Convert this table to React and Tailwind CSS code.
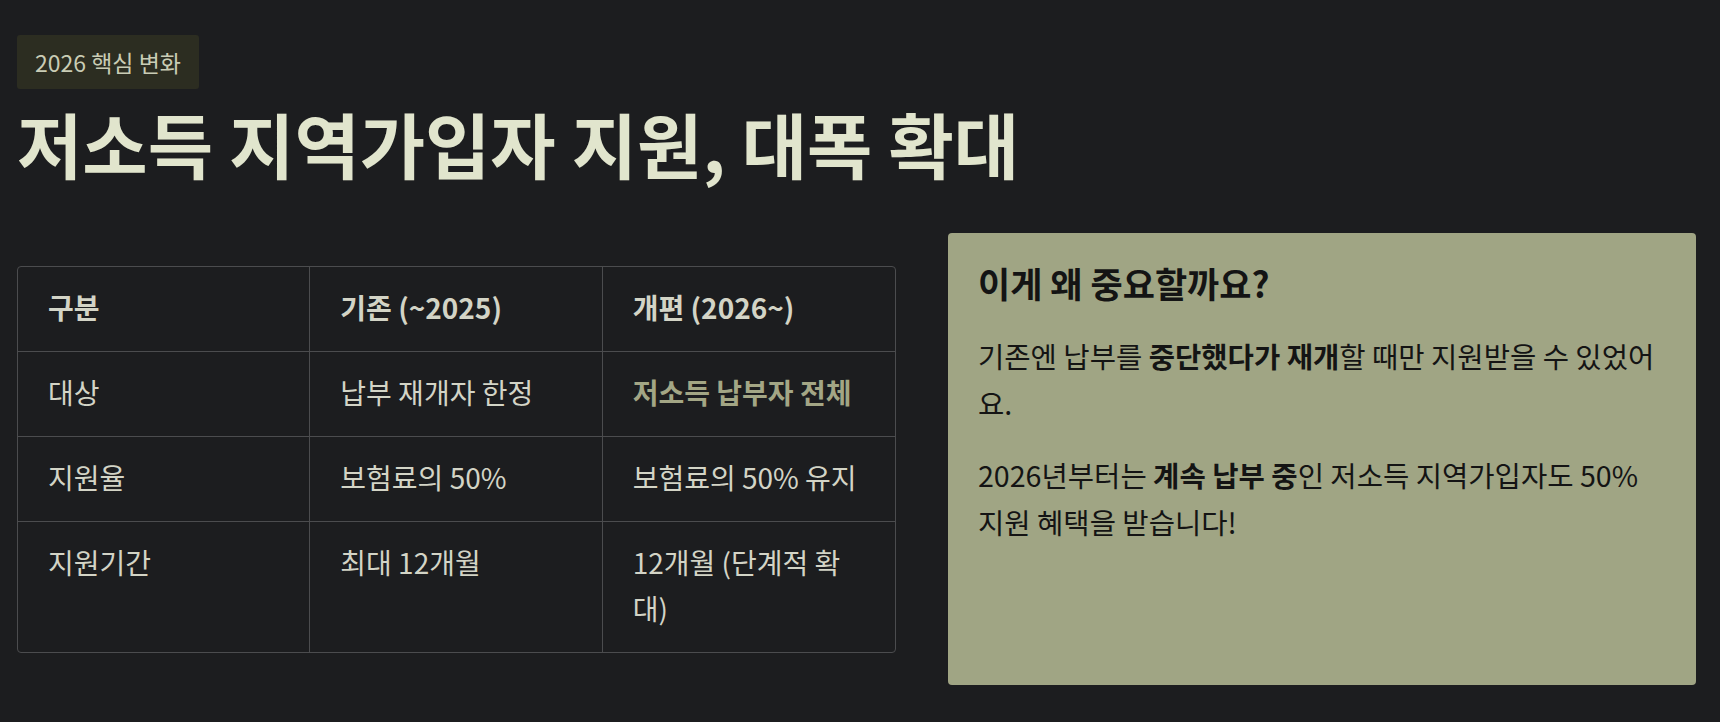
import React from "react";

export default function App() {
  const rows = [
    ["대상", "납부 재개자 한정", "저소득 납부자 전체", true],
    ["지원율", "보험료의 50%", "보험료의 50% 유지", false],
    ["지원기간", "최대 12개월", "12개월 (단계적 확대)", false],
  ];
  return (
    <div className="min-h-screen w-full bg-[#1c1d1f] pl-[17px] pr-[24px] pt-[35px] pb-[37px] font-['Noto_Sans_CJK_KR','Noto_Sans',sans-serif]">
      <div className="inline-block h-[54px] rounded-[3px] bg-[#2c2d21] px-[18px] text-[23px] leading-[54px] text-[#c9ccb5]">
        2026 핵심 변화
      </div>
      <h1 className="mt-[9px] text-[71px] font-bold leading-[88px] text-[#e1e5cd]">
        저소득 지역가입자 지원, 대폭 확대
      </h1>
      <div className="mt-[47px] flex items-center gap-[52px]">
        <div className="w-[879px] overflow-hidden rounded-[4px] border border-[#4b4c4e]">
          <div className="grid grid-cols-3 border-b border-[#4b4c4e]">
            {["구분", "기존 (~2025)", "개편 (2026~)"].map((h, i) => (
              <div
                key={h}
                className={`px-[30px] pt-[17px] pb-[21px] text-[28px] font-bold leading-[46px] text-[#d3d4c6] ${i < 2 ? "border-r border-[#4b4c4e]" : ""}`}
              >
                {h}
              </div>
            ))}
          </div>
          {rows.map((r, ri) => (
            <div
              key={r[0]}
              className={`grid grid-cols-3 ${ri < rows.length - 1 ? "border-b border-[#4b4c4e]" : ""}`}
            >
              <div className="border-r border-[#4b4c4e] px-[30px] pt-[17px] pb-[21px] text-[28px] leading-[46px] text-[#d3d4c6]">
                {r[0]}
              </div>
              <div className="border-r border-[#4b4c4e] px-[30px] pt-[17px] pb-[21px] text-[28px] leading-[46px] text-[#d3d4c6]">
                {r[1]}
              </div>
              <div
                className={`px-[30px] pt-[17px] pb-[21px] text-[28px] leading-[46px] ${r[3] ? "font-bold text-[#a3a685]" : "text-[#d3d4c6]"}`}
              >
                {r[2]}
              </div>
            </div>
          ))}
        </div>
        <div className="h-[452px] w-[748px] rounded-[4px] bg-[#a0a584] px-[30px] pt-[27px] text-[#141414]">
          <h2 className="text-[35px] font-bold leading-[45px]">이게 왜 중요할까요?</h2>
          <p className="mt-[28px] text-[28.6px] leading-[46.7px]">
            기존엔 납부를 <b>중단했다가 재개</b>할 때만 지원받을 수 있었어요.
          </p>
          <p className="mt-[26px] text-[28.6px] leading-[46.7px]">
            2026년부터는 <b>계속 납부 중</b>인 저소득 지역가입자도 50% 지원 혜택을 받습니다!
          </p>
        </div>
      </div>
    </div>
  );
}
